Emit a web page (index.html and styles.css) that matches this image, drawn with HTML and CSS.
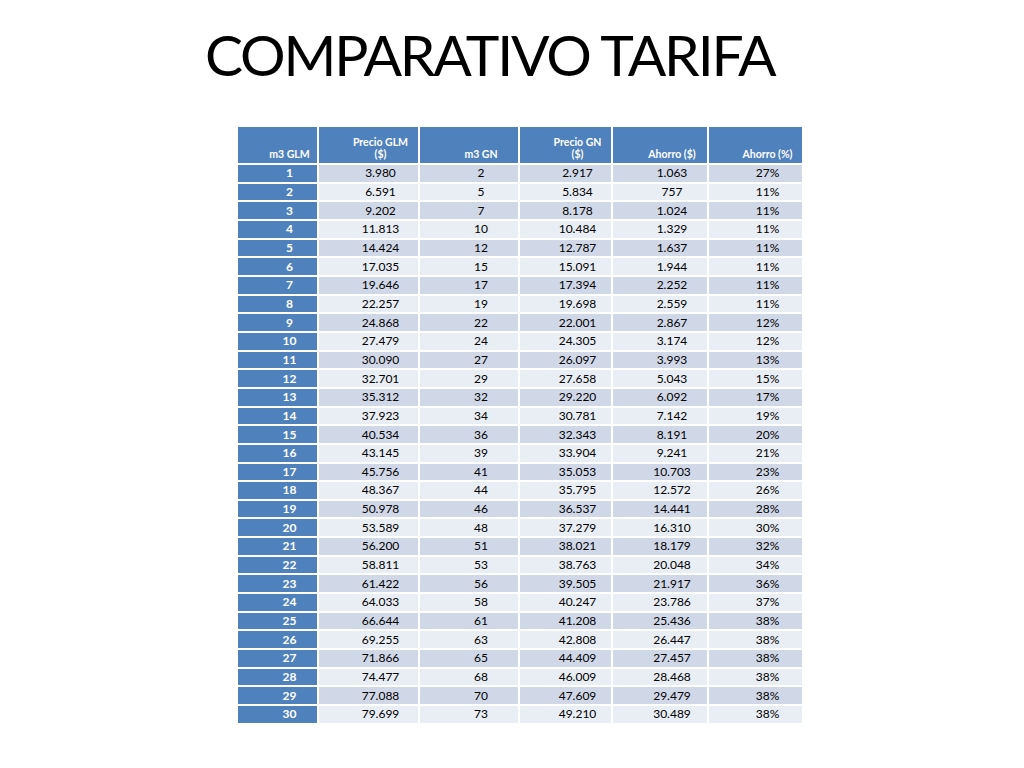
FILE: index.html
```html
<!DOCTYPE html>
<html lang="es">
<head>
<meta charset="utf-8">
<title>COMPARATIVO TARIFA</title>
<link rel="stylesheet" href="styles.css">
</head>
<body>
<div class="slide">
  <h1 class="title">COMPARATIVO TARIFA</h1>
  <table class="tarifa">
    <thead>
      <tr>
        <th class="c1">m3 GLM</th>
        <th class="c2">Precio GLM<br>($)</th>
        <th class="c3">m3 GN</th>
        <th class="c4">Precio GN<br>($)</th>
        <th class="c5">Ahorro ($)</th>
        <th class="c6">Ahorro (%)</th>
      </tr>
    </thead>
    <tbody>
      <tr><th>1</th><td>3.980</td><td>2</td><td>2.917</td><td>1.063</td><td>27%</td></tr>
      <tr><th>2</th><td>6.591</td><td>5</td><td>5.834</td><td>757</td><td>11%</td></tr>
      <tr><th>3</th><td>9.202</td><td>7</td><td>8.178</td><td>1.024</td><td>11%</td></tr>
      <tr><th>4</th><td>11.813</td><td>10</td><td>10.484</td><td>1.329</td><td>11%</td></tr>
      <tr><th>5</th><td>14.424</td><td>12</td><td>12.787</td><td>1.637</td><td>11%</td></tr>
      <tr><th>6</th><td>17.035</td><td>15</td><td>15.091</td><td>1.944</td><td>11%</td></tr>
      <tr><th>7</th><td>19.646</td><td>17</td><td>17.394</td><td>2.252</td><td>11%</td></tr>
      <tr><th>8</th><td>22.257</td><td>19</td><td>19.698</td><td>2.559</td><td>11%</td></tr>
      <tr><th>9</th><td>24.868</td><td>22</td><td>22.001</td><td>2.867</td><td>12%</td></tr>
      <tr><th>10</th><td>27.479</td><td>24</td><td>24.305</td><td>3.174</td><td>12%</td></tr>
      <tr><th>11</th><td>30.090</td><td>27</td><td>26.097</td><td>3.993</td><td>13%</td></tr>
      <tr><th>12</th><td>32.701</td><td>29</td><td>27.658</td><td>5.043</td><td>15%</td></tr>
      <tr><th>13</th><td>35.312</td><td>32</td><td>29.220</td><td>6.092</td><td>17%</td></tr>
      <tr><th>14</th><td>37.923</td><td>34</td><td>30.781</td><td>7.142</td><td>19%</td></tr>
      <tr><th>15</th><td>40.534</td><td>36</td><td>32.343</td><td>8.191</td><td>20%</td></tr>
      <tr><th>16</th><td>43.145</td><td>39</td><td>33.904</td><td>9.241</td><td>21%</td></tr>
      <tr><th>17</th><td>45.756</td><td>41</td><td>35.053</td><td>10.703</td><td>23%</td></tr>
      <tr><th>18</th><td>48.367</td><td>44</td><td>35.795</td><td>12.572</td><td>26%</td></tr>
      <tr><th>19</th><td>50.978</td><td>46</td><td>36.537</td><td>14.441</td><td>28%</td></tr>
      <tr><th>20</th><td>53.589</td><td>48</td><td>37.279</td><td>16.310</td><td>30%</td></tr>
      <tr><th>21</th><td>56.200</td><td>51</td><td>38.021</td><td>18.179</td><td>32%</td></tr>
      <tr><th>22</th><td>58.811</td><td>53</td><td>38.763</td><td>20.048</td><td>34%</td></tr>
      <tr><th>23</th><td>61.422</td><td>56</td><td>39.505</td><td>21.917</td><td>36%</td></tr>
      <tr><th>24</th><td>64.033</td><td>58</td><td>40.247</td><td>23.786</td><td>37%</td></tr>
      <tr><th>25</th><td>66.644</td><td>61</td><td>41.208</td><td>25.436</td><td>38%</td></tr>
      <tr><th>26</th><td>69.255</td><td>63</td><td>42.808</td><td>26.447</td><td>38%</td></tr>
      <tr><th>27</th><td>71.866</td><td>65</td><td>44.409</td><td>27.457</td><td>38%</td></tr>
      <tr><th>28</th><td>74.477</td><td>68</td><td>46.009</td><td>28.468</td><td>38%</td></tr>
      <tr><th>29</th><td>77.088</td><td>70</td><td>47.609</td><td>29.479</td><td>38%</td></tr>
      <tr><th>30</th><td>79.699</td><td>73</td><td>49.210</td><td>30.489</td><td>38%</td></tr>
    </tbody>
  </table>
</div>
</body>
</html>
```

FILE: styles.css
```css
html, body {
  margin: 0;
  padding: 0;
  background: #ffffff;
}

.slide {
  width: 1024px;
  height: 768px;
  font-family: Lato, "Open Sans", "Liberation Sans", sans-serif;
  color: #000000;
}

.title {
  margin: 0;
  padding: 22px 0 0 205px;
  font-weight: 400;
  font-size: 57px;
  line-height: 64px;
  letter-spacing: -2.2px;
  white-space: nowrap;
}

.tarifa {
  margin: 39px 0 0 236px;
  border-collapse: separate;
  border-spacing: 2px;
  table-layout: fixed;
  font-size: 12px;
}

.tarifa th,
.tarifa td {
  box-sizing: border-box;
  padding: 0 0 0 24px;
  text-align: center;
  white-space: nowrap;
}

.tarifa thead th {
  height: 36px;
  background: #4f81bd;
  color: #ffffff;
  font-weight: 700;
  font-size: 10.5px;
  line-height: 11.5px;
  vertical-align: bottom;
  padding-bottom: 3px;
}

.tarifa .c1 { width: 79px; }
.tarifa .c2 { width: 99px; }
.tarifa .c3 { width: 98px; }
.tarifa .c4 { width: 91px; }
.tarifa .c5 { width: 94px; }
.tarifa .c6 { width: 93px; }

.tarifa tbody th,
.tarifa tbody td {
  height: 16.66px;
  line-height: 14px;
  vertical-align: middle;
}

.tarifa tbody th {
  background: #4f81bd;
  color: #ffffff;
  font-weight: 700;
}

.tarifa tbody tr:nth-child(odd) td {
  background: #d0d8e8;
}

.tarifa tbody tr:nth-child(even) td {
  background: #e9edf4;
}
```
